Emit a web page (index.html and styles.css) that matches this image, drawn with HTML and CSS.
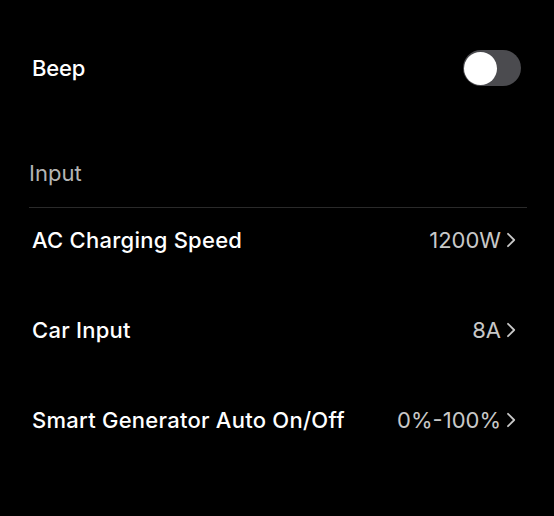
FILE: index.html
```html
<!DOCTYPE html>
<html lang="en">
<head>
<meta charset="utf-8">
<link rel="stylesheet" href="styles.css">
</head>
<body>
<div class="screen">
  <div class="row beep">
    <span class="label">Beep</span>
    <div class="toggle"><div class="knob"></div></div>
  </div>
  <div class="section-title">Input</div>
  <div class="list">
    <div class="row item">
      <span class="label">AC Charging Speed</span>
      <span class="value">1200W<svg class="chev" viewBox="0 0 10 16" width="10" height="16"><path d="M2 1.8 L8.2 8 L2 14.2" fill="none" stroke="currentColor" stroke-width="1.8" stroke-linecap="round" stroke-linejoin="round"/></svg></span>
    </div>
    <div class="row item">
      <span class="label">Car Input</span>
      <span class="value">8A<svg class="chev" viewBox="0 0 10 16" width="10" height="16"><path d="M2 1.8 L8.2 8 L2 14.2" fill="none" stroke="currentColor" stroke-width="1.8" stroke-linecap="round" stroke-linejoin="round"/></svg></span>
    </div>
    <div class="row item">
      <span class="label">Smart Generator Auto On/Off</span>
      <span class="value">0%-100%<svg class="chev" viewBox="0 0 10 16" width="10" height="16"><path d="M2 1.8 L8.2 8 L2 14.2" fill="none" stroke="currentColor" stroke-width="1.8" stroke-linecap="round" stroke-linejoin="round"/></svg></span>
    </div>
  </div>
</div>
</body>
</html>
```
FILE: styles.css
```css
html, body {
  margin: 0;
  padding: 0;
  background: #000;
}
.screen {
  width: 554px;
  height: 516px;
  background: #000;
  font-family: Inter, "Noto Sans", sans-serif;
  color: #fff;
  box-sizing: border-box;
  padding: 49px 0 0 0;
}
.row {
  display: flex;
  align-items: center;
  justify-content: space-between;
}
.beep {
  height: 37px;
  padding: 0 33px 0 32px;
}
.label {
  font-size: 22px;
  font-weight: 500;
  letter-spacing: 0.25px;
  line-height: 24px;
}
.beep .label {
  letter-spacing: -0.2px;
}
.toggle {
  width: 58px;
  height: 36px;
  border-radius: 18px;
  background: #4b4b4f;
  display: flex;
  align-items: center;
  padding: 0 2px 0 1px;
  box-sizing: border-box;
  margin-top: 1px;
}
.knob {
  width: 33px;
  height: 33px;
  border-radius: 50%;
  background: #fff;
}
.section-title {
  margin: 75px 27px 0 29px;
  font-size: 22px;
  line-height: 24px;
  color: #b4b4b4;
  padding-bottom: 22px;
  border-bottom: 1px solid #2a2a2a;
}
.list {
  display: flex;
  flex-direction: column;
  gap: 66px;
  padding: 20px 38px 0 32px;
}
.item {
  height: 24px;
}
.value {
  display: flex;
  align-items: center;
  gap: 5px;
  font-size: 22px;
  line-height: 24px;
  color: #c8c8c8;
}
.chev {
  display: block;
}
```
